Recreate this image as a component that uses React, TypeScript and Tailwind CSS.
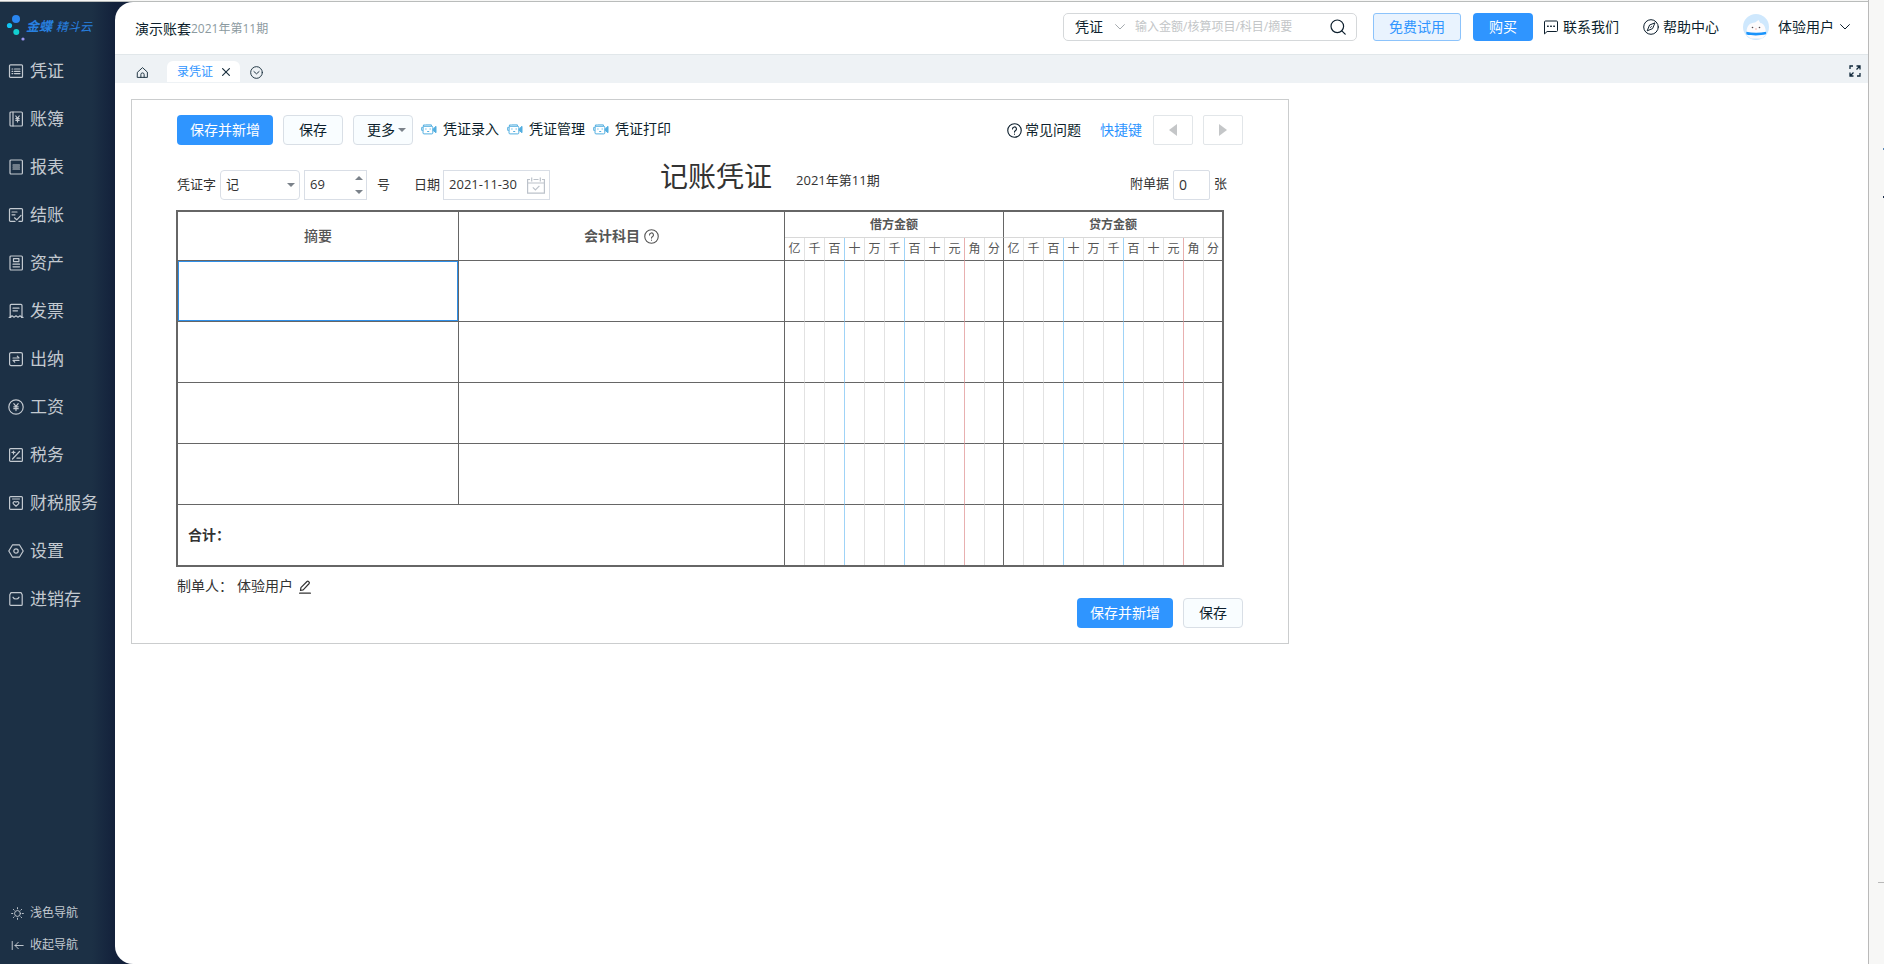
import React from "react";

const stroke = {
  fill: "none",
  stroke: "currentColor",
  strokeWidth: 1.2,
  strokeLinecap: "round" as const,
  strokeLinejoin: "round" as const,
};

function Icon({ children, className = "size-4" }: { children: React.ReactNode; className?: string }) {
  return (
    <svg viewBox="0 0 16 16" className={`${className} shrink-0`} aria-hidden="true" {...stroke}>
      {children}
    </svg>
  );
}

const navItems: { label: string; icon: React.ReactNode }[] = [
  {
    label: "凭证",
    icon: (
      <>
        <rect x="1.5" y="1.8" width="13" height="12.6" rx="1" />
        <path d="M4 6h.8M6.5 6H12M4 8.3h.8M6.5 8.3H12M4 10.6h.8M6.5 10.6H12" />
      </>
    ),
  },
  {
    label: "账簿",
    icon: (
      <>
        <rect x="2" y="1" width="12.4" height="14" rx="1" />
        <path d="M5 1v14M7.8 5l1.7 2.4L11.2 5M9.5 7.4V11M7.8 7.6h3.4M7.8 9.3h3.4" />
      </>
    ),
  },
  {
    label: "报表",
    icon: (
      <>
        <rect x="2" y="1" width="12.4" height="14" rx="1" />
        <path d="M5 6h6.5M5 8h6.5M5 10h6.5" />
      </>
    ),
  },
  {
    label: "结账",
    icon: (
      <>
        <path d="M7 14.4H2.5a1 1 0 0 1-1-1V2.6a1 1 0 0 1 1-1h11a1 1 0 0 1 1 1v10.8a1 1 0 0 1-1 1H11" />
        <path d="M4 5h5M4 7.8h3M6.5 10.8l2.2 2L13 8.4" />
      </>
    ),
  },
  {
    label: "资产",
    icon: (
      <>
        <rect x="2" y="1" width="12.4" height="14" rx="1" />
        <rect x="5.5" y="3.6" width="5.4" height="3" />
        <path d="M5 9.2h6.5M5 11.8h6.5" />
      </>
    ),
  },
  {
    label: "发票",
    icon: (
      <>
        <path d="M2.2 14.2V2.4a1 1 0 0 1 1-1H13a1 1 0 0 1 1 1v11.8l-2-1.4-2 1.4-2-1.4-2 1.4-2-1.4z" />
        <path d="M5 5.2h6M5 7.8h4.500M1.2 14.4h1.5M13.5 14.4H15" />
      </>
    ),
  },
  {
    label: "出纳",
    icon: (
      <>
        <rect x="1.6" y="1.6" width="12.8" height="13" rx="1.5" />
        <path d="M5 7h6L9.3 5.2M11 9.4H5l1.7 1.8" />
      </>
    ),
  },
  {
    label: "工资",
    icon: (
      <>
        <circle cx="8" cy="8" r="7.2" />
        <path d="M5.8 4.6L8 7.4l2.2-2.800M8 7.400v4.200M5.800 7.800h4.400M5.800 9.700h4.400" />
      </>
    ),
  },
  {
    label: "税务",
    icon: (
      <>
        <rect x="1.6" y="1.6" width="12.8" height="12.8" rx="1" />
        <path d="M4 5.4h3M5.5 4v3M11.5 4.5l-7 7.5M9 11.2h3.2" />
      </>
    ),
  },
  {
    label: "财税服务",
    icon: (
      <>
        <rect x="1.6" y="1.6" width="12.8" height="12.8" rx="1" />
        <path d="M4.500 4h7" strokeWidth="1" />
        <path d="M8 11.200L5.200 8.600C4.600 7 6.700 5.800 8 7.100 9.300 5.800 11.400 7 10.800 8.600z" />
      </>
    ),
  },
  {
    label: "设置",
    icon: (
      <>
        <path d="M4.6 1.8h6.8L15.2 8l-3.8 6.2H4.6L.8 8z" />
        <circle cx="8" cy="8" r="2.2" />
      </>
    ),
  },
  {
    label: "进销存",
    icon: (
      <>
        <path d="M3 1.6h10l1.2 2.2v9.600a1 1 0 0 1-1 1H2.800a1 1 0 0 1-1-1V3.800z" />
        <path d="M5 6.2c1 2.4 5 2.4 6 0" />
      </>
    ),
  },
];

const units = ["亿", "千", "百", "十", "万", "千", "百", "十", "元", "角", "分"];

function unitBorder(index: number, lastSide: boolean) {
  if (index === 10) return lastSide ? "" : "border-r border-r-[#666]";
  if (index === 2 || index === 5) return "border-r border-r-[#9fd3f7]";
  if (index === 8) return "border-r border-r-[#e8b0b0]";
  return "border-r border-r-[#e2e2e2]";
}

const sides = ["借方", "贷方"];

function AmountCells({ last = false }: { last?: boolean }) {
  return (
    <>
      {sides.map((side, s) =>
        units.map((_, i) => (
          <td
            key={side + i}
            className={`${last ? "" : "border-b border-b-[#666]"} ${unitBorder(i, s === 1)} p-0`}
          />
        ))
      )}
    </>
  );
}

function Logo() {
  return (
    <a href="#" className="flex h-[47px] items-center pt-[2px] pl-[6px] text-[#2880e0]">
      <svg viewBox="0 0 20 28" className="h-7 w-5 shrink-0" aria-hidden="true">
        <circle cx="10" cy="6" r="4" fill="#2a86f0" />
        <circle cx="3.5" cy="12.5" r="2.6" fill="#10c4f4" />
        <circle cx="10.3" cy="19" r="3" fill="#12cfd0" />
        <circle cx="17" cy="26" r="1.6" fill="#9a94f0" />
      </svg>
      <span className="text-[13px] font-bold italic">金蝶</span>
      <span className="ml-1 text-xs italic">精斗云</span>
    </a>
  );
}

function Sidebar() {
  return (
    <aside className="flex w-[115px] shrink-0 flex-col bg-linear-to-r from-[#1c3045] from-80% to-[#13213b] pb-[3px] text-[#c3c9d0]">
      <Logo />
      <nav>
        <ul>
          {navItems.map((item) => (
            <li key={item.label}>
              <a href="#" className="flex h-12 items-center gap-[6px] pb-1 pl-2 text-[17px]">
                <Icon>{item.icon}</Icon>
                <span>{item.label}</span>
              </a>
            </li>
          ))}
        </ul>
      </nav>
      <div className="mt-auto text-xs">
        <button type="button" className="flex h-8 items-center gap-[6px] pl-[11px]">
          <Icon className="size-[13px]">
            <circle cx="8" cy="8" r="3.6" />
            <path d="M8 .8v1.400M8 13.800v1.400M.8 8h1.400M13.800 8h1.400M2.900 2.900l1 1M12.100 12.100l1 1M2.900 13.100l1-1M12.100 3.900l1-1" />
          </Icon>
          浅色导航
        </button>
        <button type="button" className="flex h-8 items-center gap-[6px] pl-[11px]">
          <Icon className="size-[13px]">
            <path d="M1.5 3v10M5 8h10M9 4L5 8l4 4" />
          </Icon>
          收起导航
        </button>
      </div>
    </aside>
  );
}

function ChevronDown({ className }: { className: string }) {
  return (
    <svg viewBox="0 0 10 6" className={`${className} h-[6px] w-[10px] shrink-0`} aria-hidden="true" {...stroke} strokeWidth="1">
      <path d="M.6.6L5 5 9.400.6" />
    </svg>
  );
}

function Header() {
  return (
    <header className="flex h-[52px] items-center pr-[18px] pb-[2px] pl-5 text-sm text-[#0d1f2d]">
      <span className="pt-[3px]">演示账套</span>
      <span className="pt-[3px] text-xs text-[#8c9aa0]">2021年第11期</span>
      <form
        className="ml-auto flex h-7 w-[294px] items-center rounded-[5px] border border-[#d5d8da] pr-[10px] pl-[11px]"
        onSubmit={(e) => e.preventDefault()}
      >
        <select aria-label="搜索类型" className="w-10 appearance-none bg-transparent text-sm outline-none">
          <option>凭证</option>
        </select>
        <ChevronDown className="text-[#a5aaae]" />
        <input
          aria-label="搜索"
          placeholder="输入金额/核算项目/科目/摘要"
          className="ml-[10px] min-w-0 flex-1 bg-transparent text-xs outline-none placeholder:text-[#c3c6c8]"
        />
        <button type="submit" aria-label="查询">
          <Icon className="size-4">
            <circle cx="7.3" cy="7.3" r="6.3" />
            <path d="M11.8 11.8l3.4 3.4" />
          </Icon>
        </button>
      </form>
      <button type="button" className="ml-4 h-7 w-[88px] rounded-[3px] border border-[#8cc3fb] bg-[#e9f3fe] text-[#2f95ff]">
        免费试用
      </button>
      <button type="button" className="ml-3 h-7 w-[60px] rounded-[4px] bg-[#2f95ff] text-white">
        购买
      </button>
      <a href="#" className="ml-[10px] flex items-center gap-1">
        <Icon>
          <path d="M1.5 14.500V3a1 1 0 0 1 1-1h11a1 1 0 0 1 1 1v8.500a1 1 0 0 1-1 1h-9z" strokeWidth="1" />
          <path d="M4.600 7.200h.6M7.700 7.200h.6M10.800 7.200h.6" strokeWidth="1.4" />
        </Icon>
        联系我们
      </a>
      <a href="#" className="ml-6 flex items-center gap-1">
        <Icon>
          <circle cx="8" cy="8" r="7.3" strokeWidth="1" />
          <path d="M11.8 4.200L9.600 9.600 4.200 11.800 6.400 6.400zM7.600 8.400l.8-.8" strokeWidth="1" />
        </Icon>
        帮助中心
      </a>
      <button type="button" className="ml-6 flex items-center">
        <svg viewBox="0 0 26 26" className="size-[26px]" aria-hidden="true">
          <circle cx="13" cy="13" r="13" fill="#cfe8fd" />
          <path d="M3.500 18C4 11 7 9 12 8.600L15.500 6l1.800 3c3.700.6 5 4 5.700 9v3l-4 3.500H8L3 21z" fill="#fdfbfc" />
          <path d="M3.300 17.700c6 1.300 13.500 1.300 19.800 0v2.600c-6 1.400-14 1.400-19.800.2z" fill="#1a94fb" />
          <circle cx="9.500" cy="13.500" r=".8" fill="#554a50" />
          <circle cx="16.500" cy="13.500" r=".8" fill="#554a50" />
          <path d="M12.300 15h1.400" stroke="#f09a90" strokeWidth="1" />
        </svg>
        <span className="ml-[9px]">体验用户</span>
        <ChevronDown className="ml-[6px]" />
      </button>
    </header>
  );
}

function TabBar() {
  return (
    <div className="flex h-[29px] items-end border-t border-[#e1e7ea] bg-[#eef2f5] pr-[7px] pb-px pl-[21px] text-xs text-[#1f3442]">
      <button type="button" aria-label="首页" className="flex h-5 items-center">
        <Icon className="size-[13px]">
          <path d="M2 7.500L8 2l6 5.500V14H2zM6 14v-3.500a2 2 0 0 1 4 0V14" />
        </Icon>
      </button>
      <div className="ml-[18px] flex h-[21px] w-[73px] items-center rounded-t-[6px] bg-white pl-[10px]">
        <a href="#" className="text-[#2f95ff]">录凭证</a>
        <button type="button" aria-label="关闭" className="ml-[9px]">
          <svg viewBox="0 0 8 8" className="size-2" aria-hidden="true" {...stroke}>
            <path d="M.6.6l6.800 6.800M7.400.6L.6 7.400" />
          </svg>
        </button>
      </div>
      <button type="button" aria-label="更多标签" className="ml-[10px] flex h-5 items-center">
        <Icon className="size-[13px]">
          <circle cx="8" cy="8" r="7.2" />
          <path d="M4.800 6.800L8 9.600l3.200-2.800" />
        </Icon>
      </button>
      <button type="button" aria-label="全屏" className="ml-auto pb-[5px]">
        <svg viewBox="0 0 12 12" className="size-3" fill="none" stroke="#12293b" strokeWidth="1.3" aria-hidden="true">
          <path d="M4 1H1v3M8 11h3V8M7.500 1H11v3.500M11 1L7.500 4.500M4.500 11H1V7.500M1 11l3.500-3.500" />
        </svg>
      </button>
    </div>
  );
}

const plainButton = "h-[30px] rounded-[4px] border border-[#d9dfe6] bg-[#f9fdff] text-sm text-[#0d1f2d]";
const primaryButton = "h-[30px] w-24 rounded-[4px] bg-[#2f95ff] text-sm text-white";

function VideoIcon() {
  return (
    <svg viewBox="0 0 16 11" className="h-[11px] w-4 shrink-0" fill="none" stroke="#52aee0" strokeWidth="1" aria-hidden="true">
      <path d="M2.400 2.200V1h2.200M4.600.9h5.800v1.300M2.200 2.300h8.600a1 1 0 0 1 1 1v5.600a1 1 0 0 1-1 1H3a1 1 0 0 1-1-1zM1.800 3.400H.7v3h1.100" />
      <path d="M12.200 5L15 2.300v6.400L12.200 6.500z" fill="#52aee0" />
      <path d="M4.300 5h1.200M8.600 5h1.200M6.200 7.500h2" />
    </svg>
  );
}

function Caret({ up = false }: { up?: boolean }) {
  return (
    <svg viewBox="0 0 8 4" className="h-1 w-2" fill="#7b828a" aria-hidden="true">
      <path d={up ? "M0 4L4 0l4 4z" : "M0 0h8L4 4z"} />
    </svg>
  );
}

function HelpIcon() {
  return (
    <Icon className="size-[15px]">
      <circle cx="8" cy="8" r="7.2" />
      <path d="M5.900 6.300a2.100 2.100 0 1 1 3 1.900c-.7.4-.9.7-.9 1.500M8 11.900v.1" />
    </Icon>
  );
}

function Toolbar() {
  return (
    <div className="flex items-center text-sm text-[#0d1f2d]">
      <button type="button" className={primaryButton}>保存并新增</button>
      <button type="button" className={`${plainButton} ml-[10px] w-[60px]`}>保存</button>
      <button type="button" className={`${plainButton} ml-[10px] flex w-[60px] items-center justify-end gap-[3px] pr-[6px]`}>
        更多
        <Caret />
      </button>
      <div className="ml-2 flex gap-2 pb-[2px]">
        {["凭证录入", "凭证管理", "凭证打印"].map((label) => (
          <a key={label} href="#" className="flex items-center gap-[6px]">
            <VideoIcon />
            {label}
          </a>
        ))}
      </div>
      <a href="#" className="ml-auto flex items-center gap-[3px]">
        <HelpIcon />
        常见问题
      </a>
      <a href="#" className="ml-[19px] text-[#2f95ff]">快捷键</a>
      <button type="button" aria-label="上一张" className="ml-[11px] flex h-[30px] w-10 items-center justify-center rounded-[2px] border border-[#e2e6e9]">
        <svg viewBox="0 0 8 12" className="h-3 w-2" fill="#c4c6c8" aria-hidden="true"><path d="M8 0v12L0 6z" /></svg>
      </button>
      <button type="button" aria-label="下一张" className="ml-[10px] flex h-[30px] w-10 items-center justify-center rounded-[2px] border border-[#e2e6e9]">
        <svg viewBox="0 0 8 12" className="h-3 w-2" fill="#c4c6c8" aria-hidden="true"><path d="M0 0v12l8-6z" /></svg>
      </button>
    </div>
  );
}

function VoucherFields() {
  return (
    <div className="mt-[25px] flex h-[30px] items-center text-[13px] text-[#333]">
      <label htmlFor="word">凭证字</label>
      <div className="ml-1 grid h-[30px] w-20 items-center rounded-[4px] border border-[#d9dee6]">
        <select id="word" className="col-start-1 row-start-1 h-full w-full appearance-none bg-transparent pl-[5px] outline-none">
          <option>记</option>
        </select>
        <span className="pointer-events-none col-start-1 row-start-1 mr-1 flex justify-self-end">
          <Caret />
        </span>
      </div>
      <div className="ml-1 flex h-[30px] w-[63px] border border-[#d9dee6]">
        <input id="number" aria-label="凭证号" defaultValue="69" className="min-w-0 flex-1 pl-[5px] outline-none" />
        <div className="flex flex-col justify-between py-[5px] pr-[3px]">
          <button type="button" aria-label="增加"><Caret up /></button>
          <button type="button" aria-label="减少"><Caret /></button>
        </div>
      </div>
      <label htmlFor="number" className="ml-[10px]">号</label>
      <label htmlFor="date" className="ml-6">日期</label>
      <div className="ml-[3px] flex h-[30px] w-[107px] items-center border border-[#d9dee6] pr-1">
        <input id="date" defaultValue="2021-11-30" className="min-w-0 flex-1 pl-[5px] outline-none" />
        <svg viewBox="0 0 18 17" className="h-[17px] w-[18px]" fill="none" stroke="#bcc2ca" strokeWidth="1.2" aria-hidden="true">
          <path d="M3 2.500H.6v13.700h16.800V2.500H15M6.500 2.500h5M.6 6h16.800M4.700.5v4M13.300.5v4M5.800 10.300l2.600 2.600 4-4" />
        </svg>
      </div>
      <h1 className="ml-[110px] pb-[18px] text-[28px] leading-8 text-[#333]">记账凭证</h1>
      <span className="ml-6 pb-2">2021年第11期</span>
      <label htmlFor="attachments" className="ml-auto pb-[2px]">附单据</label>
      <input
        id="attachments"
        defaultValue="0"
        className="mx-1 h-[30px] w-[37px] rounded-[2px] border border-[#d9dee6] pb-[2px] pl-[5px] text-sm outline-none"
      />
      <span className="mr-4 pb-[2px]">张</span>
    </div>
  );
}

function VoucherTable() {
  return (
    <table className="mt-[10px] -ml-px w-[1048px] table-fixed border-separate border-spacing-0 border-2 border-[#666] text-[#555]">
      <colgroup>
        <col className="w-[281px]" />
        <col className="w-[326px]" />
        {sides.map((side, s) =>
          units.map((_, i) => (
            <col key={side + i} className={i < 10 ? "w-[20px]" : s === 0 ? "w-[19px]" : "w-[18px]"} />
          ))
        )}
      </colgroup>
      <thead>
        <tr className="h-[26px]">
          <th rowSpan={2} className="border-r border-b border-[#666] p-0 text-sm font-medium">摘要</th>
          <th rowSpan={2} className="border-r border-b border-[#666] p-0 text-sm font-bold">
            <span className="flex items-center justify-center gap-1">
              会计科目
              <HelpIcon />
            </span>
          </th>
          <th colSpan={11} className="border-r border-b border-r-[#666] border-b-[#d8d8d8] p-0 text-xs font-bold">借方金额</th>
          <th colSpan={11} className="border-b border-b-[#d8d8d8] p-0 text-xs font-bold">贷方金额</th>
        </tr>
        <tr className="h-[23px]">
          {sides.map((side, s) =>
            units.map((unit, i) => (
              <th key={side + i} className={`border-b border-b-[#666] ${unitBorder(i, s === 1)} p-0 text-xs font-normal`}>
                {unit}
              </th>
            ))
          )}
        </tr>
      </thead>
      <tbody>
        {[1, 2, 3, 4].map((row) => (
          <tr key={row} className="h-[61px]">
            <td className="border-r border-b border-[#666] p-0">
              <textarea
                aria-label={`摘要 ${row}`}
                className={`block h-[60px] w-full resize-none p-2 text-sm outline-none ${row === 1 ? "border border-[#2f8fe8]" : ""}`}
              />
            </td>
            <td className="border-r border-b border-[#666] p-0">
              <textarea aria-label={`会计科目 ${row}`} className="block h-[60px] w-full resize-none p-2 text-sm outline-none" />
            </td>
            <AmountCells />
          </tr>
        ))}
      </tbody>
      <tfoot>
        <tr className="h-[60px]">
          <th colSpan={2} className="border-r border-[#666] py-0 pr-0 pl-[10px] text-left text-sm font-bold text-[#333]">
            合计：
          </th>
          <AmountCells last />
        </tr>
      </tfoot>
    </table>
  );
}

export default function App() {
  return (
    <div className="flex min-h-screen bg-[#f7f7f6] font-['Open_Sans','Noto_Sans_CJK_SC',sans-serif]">
      <div className="flex min-w-0 flex-1 flex-col border-r border-[#b9b9b9]">
        <div className="h-[2px] border-b border-[#b9bcbb] bg-[#f7f7f6]" />
        <div className="flex flex-1 bg-[#13213b]">
          <Sidebar />
          <div className="min-w-0 flex-1 overflow-hidden rounded-l-[18px] bg-white">
            <Header />
            <TabBar />
            <main className="px-4 pt-4">
              <section className="w-[1158px] border border-[#cbcdce] px-[45px] py-[15px]">
                <Toolbar />
                <VoucherFields />
                <VoucherTable />
                <div className="mt-2 flex h-[23px] items-center pb-[2px] text-sm text-[#333]">
                  <span>制单人：</span>
                  <span className="ml-1">体验用户</span>
                  <button type="button" aria-label="修改制单人" className="ml-[6px] pt-[3px]">
                    <svg viewBox="0 0 12 14" className="h-[14px] w-3" aria-hidden="true" {...stroke}>
                      <path d="M1.500 10.500l.4-2.800L8 1.500c1-.9 3 .9 2.200 2L4.200 9.900zM.6 13.200h10.800" />
                    </svg>
                  </button>
                </div>
                <div className="flex justify-end gap-[10px]">
                  <button type="button" className={primaryButton}>保存并新增</button>
                  <button type="button" className={`${plainButton} w-[60px]`}>保存</button>
                </div>
              </section>
            </main>
          </div>
        </div>
      </div>
      <div className="relative w-[15px] shrink-0">
        <span className="absolute top-[148px] right-0 h-[2px] w-px bg-[#5b87b5]" />
        <span className="absolute top-[196px] right-0 h-[2px] w-px bg-[#1b2c4a]" />
        <span className="absolute top-[882px] right-0 h-px w-[6px] bg-[#b9b9b9]" />
      </div>
    </div>
  );
}
